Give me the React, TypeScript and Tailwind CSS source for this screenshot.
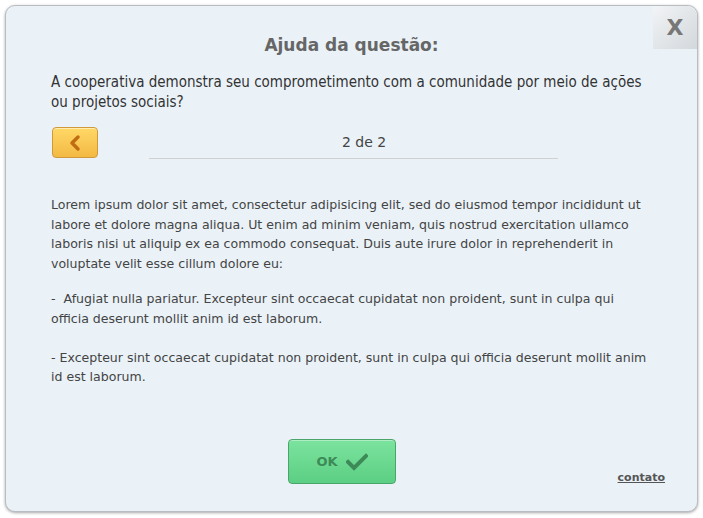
import React from "react";

export default function App() {
  return (
    <div className="w-[703px] h-[518px] bg-white p-[5px] pb-[6px]" style={{ fontFamily: '"DejaVu Sans", Verdana, sans-serif' }}>
      <div className="relative h-full w-full rounded-[10px] border border-[#b9bdc1] bg-[#eaf2f8] shadow-[0_1px_3px_rgba(0,0,0,0.35)] flex flex-col">
        <button className="absolute right-0 top-0 w-[44px] h-[43px] rounded-tr-[10px] bg-gradient-to-br from-[#f2f4f6] to-[#d3d8dc] flex items-center justify-center text-[#777777] text-[22px] font-bold leading-none">
          X
        </button>
        <h1 className="mt-[28px] text-center text-[17px] font-bold text-[#666666] leading-[22px]">Ajuda da questão:</h1>
        <p className="mt-[16px] ml-[45px] w-[600px] text-[15px] leading-[20px] text-[#333]" style={{ fontFamily: '"DejaVu Sans Condensed", "DejaVu Sans", sans-serif', fontStretch: "condensed" }}>
          A cooperativa demonstra seu comprometimento com a comunidade por meio de ações ou projetos sociais?
        </p>
        <div className="mt-[15px] mx-[46px] flex items-start">
          <button className="w-[46px] h-[31px] rounded-[4px] border border-[#d09a3b] bg-gradient-to-b from-[#ffd866] to-[#f3b943] shadow-[inset_0_1px_0_rgba(255,255,255,0.5)] flex items-center justify-center">
            <svg width="16" height="18" viewBox="0 0 16 18">
              <path d="M11 3 L5 9 L11 15" fill="none" stroke="#c06d12" strokeWidth="3.5" strokeLinecap="round" strokeLinejoin="round" />
            </svg>
          </button>
          <div className="ml-[51px] w-[409px] h-[32px] border-b border-[#cdd1d4] flex items-center justify-center pl-[21px] text-[14px] text-[#444]">2 de 2</div>
        </div>
        <div className="mt-[36px] mx-[45px] text-[12.55px] leading-[19.6px] text-[#444]">
          <p>Lorem ipsum dolor sit amet, consectetur adipisicing elit, sed do eiusmod tempor incididunt ut labore et dolore magna aliqua. Ut enim ad minim veniam, quis nostrud exercitation ullamco laboris nisi ut aliquip ex ea commodo consequat. Duis aute irure dolor in reprehenderit in voluptate velit esse cillum dolore eu:</p>
          <p className="mt-[16px]">-&nbsp; Afugiat nulla pariatur. Excepteur sint occaecat cupidatat non proident, sunt in culpa qui officia deserunt mollit anim id est laborum.</p>
          <p className="mt-[19px]">- Excepteur sint occaecat cupidatat non proident, sunt in culpa qui officia deserunt mollit anim id est laborum.</p>
        </div>
        <div className="mt-auto mb-[27px] relative flex justify-center">
          <button className="mr-[19px] w-[108px] h-[45px] rounded-[4px] border border-[#4aa56a] bg-gradient-to-b from-[#7be39e] to-[#5ccf84] shadow-[inset_0_1px_0_rgba(255,255,255,0.4)] flex items-center justify-center gap-[8px]">
            <span className="text-[13px] font-bold text-[#3d8a58]">OK</span>
            <svg width="22" height="18" viewBox="0 0 22 18">
              <path d="M2 9 L8 15 L20 3" fill="none" stroke="#3d8a58" strokeWidth="4" strokeLinecap="square" />
            </svg>
          </button>
          <a className="absolute right-[32px] bottom-[-2px] text-[11px] font-bold text-[#555] underline">contato</a>
        </div>
      </div>
    </div>
  );
}
